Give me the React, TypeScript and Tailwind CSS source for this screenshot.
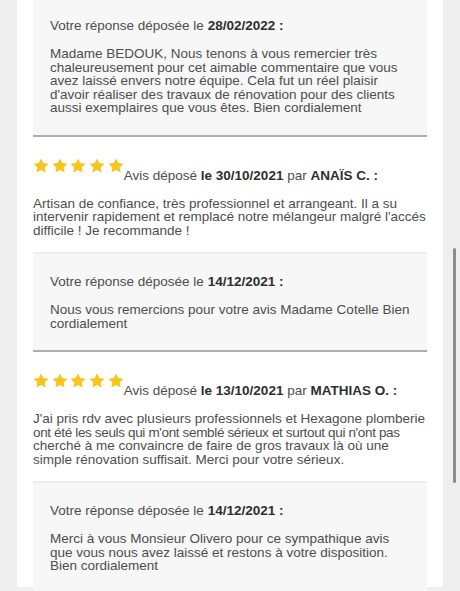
import React from "react";

const Star = () => (
  <svg width="16" height="15" viewBox="0 0 24 23" className="block">
    <path d="M12 0.6l3.5 7.2 7.9 1.1-5.7 5.5 1.4 7.8L12 18.5 4.9 22.2l1.4-7.8L0.6 8.9l7.9-1.1z" fill="#f8c51c" />
  </svg>
);

const Stars = () => (
  <div className="flex gap-[2.7px] h-[15px] mt-[-1px]">
    <Star />
    <Star />
    <Star />
    <Star />
    <Star />
  </div>
);

function Response({ date, text, first }: { date: string; text: React.ReactNode; first?: boolean }) {
  return (
    <div
      className={
        "bg-[#f7f7f7] border-t-2 border-t-[#ededed] border-b-2 border-b-[#adadad] px-[17px] pt-[21px] pb-[20px] " +
        (first ? "mt-[-4px]" : "mt-[15px]")
      }
    >
      <div className="text-[#4d4d4d]">
        Votre réponse déposée le <b className="text-[#2e2e2e]">{date} :</b>
      </div>
      <div className="mt-[14.5px] text-[#4d4d4d]">{text}</div>
    </div>
  );
}

function Review({ date, name, text }: { date: string; name: string; text: React.ReactNode }) {
  return (
    <div className="mt-[22px]">
      <div className="flex items-start">
        <Stars />
        <div className="pt-[10px] text-[#4d4d4d]">
          Avis déposé <b className="text-[#2e2e2e]">le {date}</b> par <b className="text-[#2e2e2e]">{name} :</b>
        </div>
      </div>
      <div className="mt-[14.5px] mr-[-6px] text-[#4d4d4d]">{text}</div>
    </div>
  );
}

export default function App() {
  return (
    <div
      className="relative w-[460px] h-[591px] overflow-hidden bg-[#efefef] text-[13.5px] leading-[13.5px]"
      style={{ fontFamily: '"Liberation Sans", Arial, sans-serif' }}
    >
      <div className="ml-[17px] w-[426px] h-full bg-white px-[16px]">
        <Response
          first
          date="28/02/2022"
          text="Madame BEDOUK, Nous tenons à vous remercier très chaleureusement pour cet aimable commentaire que vous avez laissé envers notre équipe. Cela fut un réel plaisir d'avoir réaliser des travaux de rénovation pour des clients aussi exemplaires que vous êtes. Bien cordialement"
        />
        <Review
          date="30/10/2021"
          name="ANAÏS C."
          text="Artisan de confiance, très professionnel et arrangeant. Il a su intervenir rapidement et remplacé notre mélangeur malgré l'accés difficile ! Je recommande !"
        />
        <Response date="14/12/2021" text="Nous vous remercions pour votre avis Madame Cotelle Bien cordialement" />
        <Review
          date="13/10/2021"
          name="MATHIAS O."
          text={
            <div className="whitespace-nowrap">
              <div>J'ai pris rdv avec plusieurs professionnels et Hexagone plomberie</div>
              <div className="tracking-[-0.35px]">ont été les seuls qui m'ont semblé sérieux et surtout qui n'ont pas</div>
              <div>cherché à me convaincre de faire de gros travaux là où une</div>
              <div>simple rénovation suffisait. Merci pour votre sérieux.</div>
            </div>
          }
        />
        <Response
          date="14/12/2021"
          text={
            <>
              Merci à vous Monsieur Olivero pour ce sympathique avis que vous nous avez laissé et restons à votre disposition.
              <br />
              Bien cordialement
            </>
          }
        />
      </div>
      <div className="absolute left-[453px] top-[248px] w-[3px] h-[235px] rounded-full bg-[#8c8c8c]" />
    </div>
  );
}
